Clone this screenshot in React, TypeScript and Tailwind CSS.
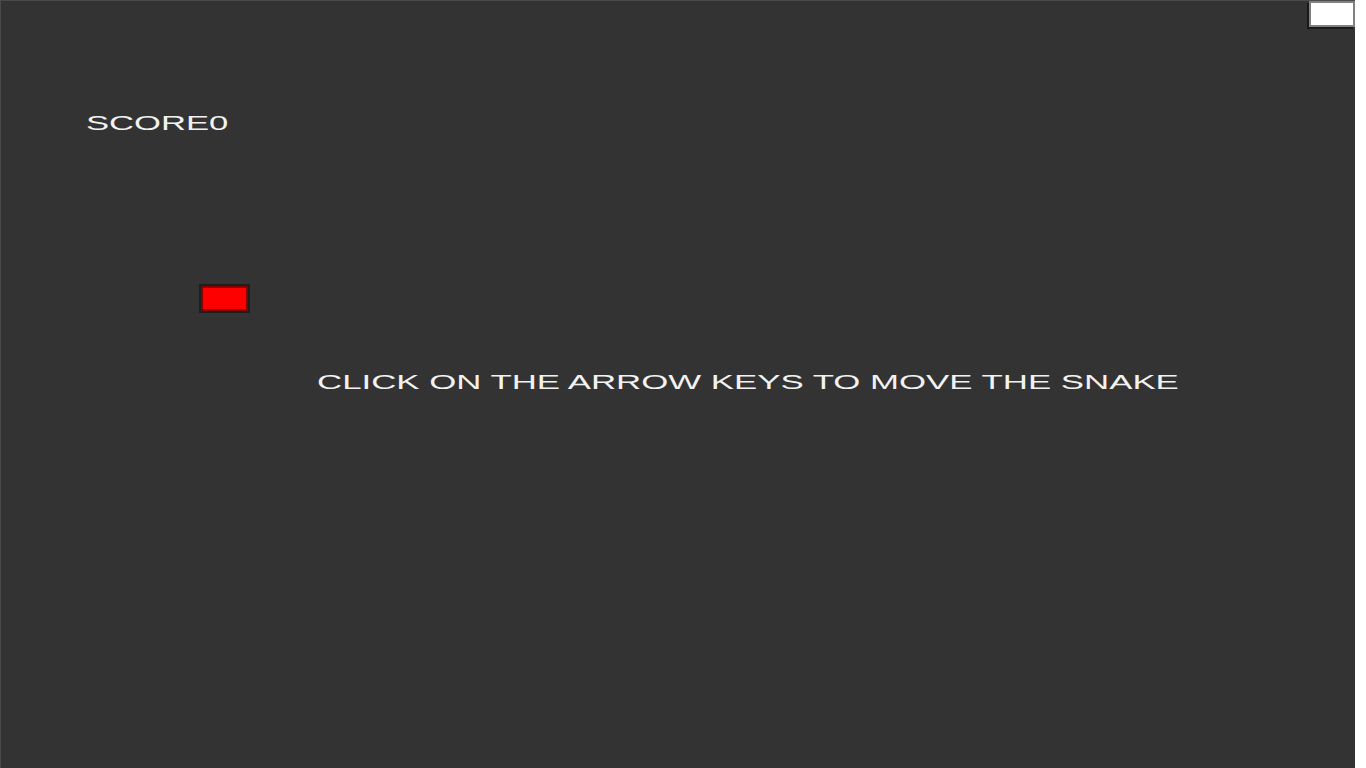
export default function App() {
  return (
    <div className="min-h-screen bg-white font-['Liberation_Sans',Arial,sans-serif]">
      <div className="w-[1355px] h-[768px] bg-[#333333] border-l border-t border-[#4a4a4a] flex flex-col overflow-hidden">
        {/* top right button */}
        <div className="flex justify-end">
          <div className="w-[46px] h-[26px] bg-white border-2 border-[#808080] shadow-[-2px_2px_0_#1a1a1a]" />
        </div>

        <div className="mt-[86px] pl-[85px] h-[20px] leading-[20px] text-[20px] text-[#f2f2f2]">
          <span className="inline-block origin-left scale-x-[1.73]">SCORE0</span>
        </div>

        {/* food */}
        <div className="mt-[151px] ml-[198px] w-[51px] h-[29px] bg-[#ff0000] border-2 border-[#1e1e1e] shadow-[inset_0_0_0_2px_#8a0000]" />

        <div className="mt-[59px] pl-[316px] h-[20px] leading-[20px] text-[20px] text-[#f2f2f2] whitespace-nowrap">
          <span className="inline-block origin-left scale-x-[1.74]">CLICK ON THE ARROW KEYS TO MOVE THE SNAKE</span>
        </div>
      </div>
    </div>
  );
}
